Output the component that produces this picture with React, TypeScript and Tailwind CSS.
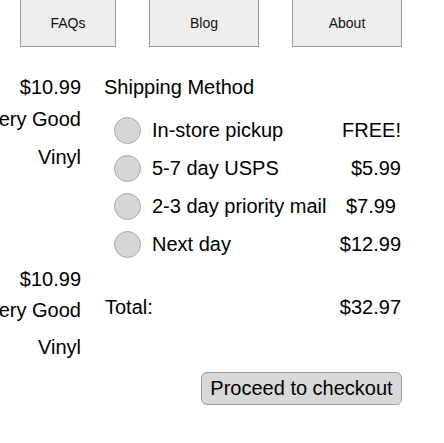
import React from "react";

const font = { fontFamily: '"Liberation Sans", Arial, sans-serif' };

function Radio() {
  return (
    <div className="w-[27px] h-[27px] shrink-0 rounded-full bg-[#d6d6d6] border border-[#a8a8a8]" />
  );
}

function Row({ label, price, priceClass = "" }: { label: string; price: string; priceClass?: string }) {
  return (
    <div className="flex h-[38px] items-center">
      <div className="ml-[10px]">
        <Radio />
      </div>
      <div className="ml-[11px] leading-[23px] whitespace-nowrap">{label}</div>
      <div className={"ml-auto leading-[23px] whitespace-nowrap " + priceClass}>{price}</div>
    </div>
  );
}

export default function App() {
  return (
    <div className="w-[444px] h-[443px] overflow-hidden bg-white text-black" style={font}>
      <nav className="flex pl-[20px] gap-[33px] -mt-[1px]">
        <div className="w-[96px] h-[48px] flex items-center justify-center border border-[#9a9a9a] bg-[#eeeeee] text-[14px] text-[#111]">
          FAQs
        </div>
        <div className="w-[110px] h-[48px] flex items-center justify-center border border-[#9a9a9a] bg-[#eeeeee] text-[14px] text-[#111]">
          Blog
        </div>
        <div className="w-[110px] h-[48px] flex items-center justify-center border border-[#9a9a9a] bg-[#eeeeee] text-[14px] text-[#111]">
          About
        </div>
      </nav>
      <main className="flex pt-[29px] text-[20px]">
        <div className="w-[81px] shrink-0 flex flex-col items-end leading-[23px]">
          <div className="whitespace-nowrap">$10.99</div>
          <div className="whitespace-nowrap mt-[9px]">Very Good</div>
          <div className="whitespace-nowrap mt-[15px]">Vinyl</div>
          <div className="whitespace-nowrap mt-[99px]">$10.99</div>
          <div className="whitespace-nowrap mt-[8px]">Very Good</div>
          <div className="whitespace-nowrap mt-[14px]">Vinyl</div>
        </div>
        <div className="ml-[23px] w-[297px] shrink-0 flex flex-col">
          <div className="leading-[23px] whitespace-nowrap">Shipping Method</div>
          <div className="mt-[12px] flex flex-col">
            <Row label="In-store pickup" price="FREE!" />
            <Row label="5-7 day USPS" price="$5.99" />
            <Row label="2-3 day priority mail" price="$7.99" priceClass="mr-[5px]" />
            <Row label="Next day" price="$12.99" />
          </div>
          <div className="mt-[33px] flex leading-[23px]">
            <div className="ml-[1px]">Total:</div>
            <div className="ml-auto">$32.97</div>
          </div>
          <div className="mt-[53px] flex justify-end">
            <button className="h-[33px] w-[201px] -mr-[1px] rounded-[6px] border border-[#9a9a9a] bg-[#d8d8d8] text-[20px] leading-[23px] text-black whitespace-nowrap flex items-center justify-center">
              Proceed to checkout
            </button>
          </div>
        </div>
      </main>
    </div>
  );
}
